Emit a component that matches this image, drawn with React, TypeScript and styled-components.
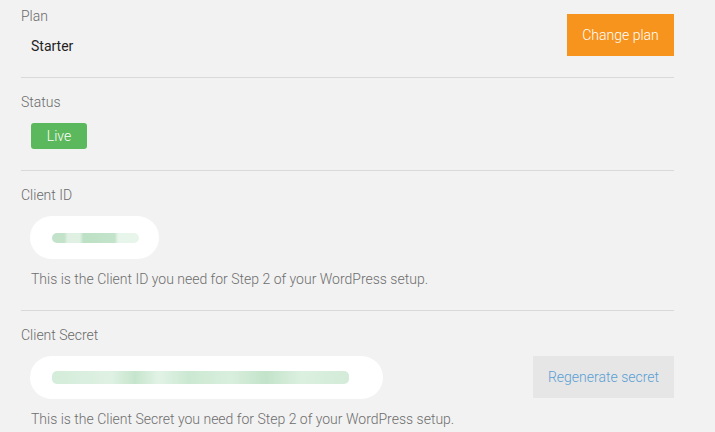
import React from 'react'
import styled, {createGlobalStyle} from "styled-components";

const GlobalStyle = createGlobalStyle`
    html, body {
        margin: 0;
        padding: 0;
        background: #f2f2f2;
        font-family: Roboto, "Liberation Sans", Arial, sans-serif;
    }
`;

export default function App(){
    return(
        <>
            <GlobalStyle/>
            <Page>
                <Section>
                    <Row>
                        <div>
                            <Label>Plan</Label>
                            <Value>Starter</Value>
                        </div>
                        <PlanButton>Change plan</PlanButton>
                    </Row>
                </Section>
                <Section>
                    <Label>Status</Label>
                    <Badge>Live</Badge>
                </Section>
                <Section>
                    <Label>Client ID</Label>
                    <Field width={129}>
                        <Redacted width={87}/>
                    </Field>
                    <Help>This is the Client ID you need for Step 2 of your WordPress setup.</Help>
                </Section>
                <Section>
                    <Label>Client Secret</Label>
                    <Row>
                        <Field width={353}>
                            <Redacted width={297} long/>
                        </Field>
                        <SecretButton>Regenerate secret</SecretButton>
                    </Row>
                    <Help>This is the Client Secret you need for Step 2 of your WordPress setup.</Help>
                </Section>
            </Page>
        </>
    )
}

const Page = styled.div`
    width: 653px;
    margin-left: 21px;
`;

const Section = styled.div`
    padding: 14px 0 21px;
    border-bottom: 1px solid #d9d9d9;

    &:first-child{
        padding-top: 6px;
    }
    &:last-child{
        border-bottom: none;
    }
`;

const Row = styled.div`
    display: flex;
    justify-content: space-between;
    align-items: flex-end;
`;

const Label = styled.div`
    font-size: 14px;
    font-weight: 300;
    line-height: 20px;
    color: #6a6a6a;
`;

const Value = styled.div`
    margin: 10px 0 0 10px;
    font-size: 14px;
    line-height: 20px;
    color: #1f1f1f;
`;

const PlanButton = styled.button`
    height: 42px;
    width: 107px;
    border: none;
    background: #f7941d;
    color: #fff;
    font-family: inherit;
    font-size: 14px;
    font-weight: 300;
    padding: 0;
`;

const Badge = styled.div`
    display: inline-flex;
    align-items: center;
    justify-content: center;
    margin: 11px 0 0 10px;
    width: 56px;
    height: 26px;
    border-radius: 3px;
    background: #5cb85c;
    color: #fff;
    font-size: 14px;
    font-weight: 300;
`;

const Field = styled.div<{width: number}>`
    display: flex;
    align-items: center;
    margin: 11px 0 0 9px;
    width: ${p => p.width}px;
    height: 43px;
    border-radius: 22px;
    background: #fff;
    padding-left: 22px;
    box-sizing: border-box;
    align-self: flex-start;
`;

const Redacted = styled.div<{width: number; long?: boolean}>`
    width: ${p => p.width}px;
    height: ${p => p.long ? 13 : 10}px;
    border-radius: 5px;
    filter: blur(0.7px);
    background: ${p => p.long
        ? "linear-gradient(90deg, #d4ecda 0%, #dff1e3 20%, #c6e5cd 28%, #e2f3e6 36%, #cbe8d2 46%, #d9efde 60%, #c3e3ca 72%, #dcf0e0 84%, #d3ebd8 100%)"
        : "linear-gradient(90deg, #c2e2c9 0%, #c2e2c9 14%, #e0f1e4 18%, #e0f1e4 32%, #bde1c5 36%, #c3e4cb 72%, #e8f5ea 76%, #e8f5ea 100%)"};
`;

const SecretButton = styled.button`
    margin-top: 11px;
    align-self: flex-start;
    width: 141px;
    height: 42px;
    border: none;
    background: #e6e6e6;
    color: #5a9fd4;
    font-family: inherit;
    font-size: 14px;
    font-weight: 300;
    padding: 0;
`;

const Help = styled.div`
    margin: 10px 0 0 10px;
    font-size: 14px;
    font-weight: 300;
    line-height: 20px;
    color: #6e6e6e;
`;
